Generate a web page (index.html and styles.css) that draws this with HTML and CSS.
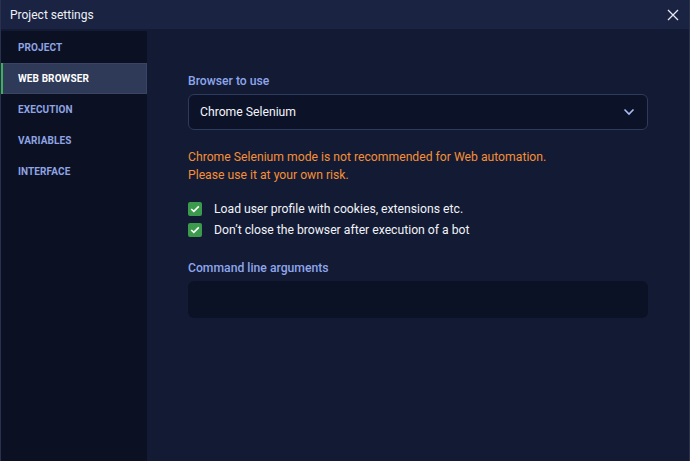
FILE: index.html
```html
<!DOCTYPE html>
<html lang="en">
<head>
    <meta charset="UTF-8" />
    <title>Project settings</title>
    <link rel="stylesheet" href="styles.css">
</head>
<body>
    <div class="window">
        <header class="titlebar">
            <span class="title">Project settings</span>
            <button class="close" aria-label="Close">
                <svg width="12" height="12" viewBox="0 0 12 12"><path d="M1 1 L11 11 M11 1 L1 11" stroke="#e6e9f2" stroke-width="1.3" fill="none"/></svg>
            </button>
        </header>
        <div class="body">
            <nav class="sidebar">
                <a class="nav-item">PROJECT</a>
                <a class="nav-item active">WEB BROWSER</a>
                <a class="nav-item">EXECUTION</a>
                <a class="nav-item">VARIABLES</a>
                <a class="nav-item">INTERFACE</a>
            </nav>
            <main class="content">
                <label class="field-label">Browser to use</label>
                <div class="select">
                    <span>Chrome Selenium</span>
                    <svg width="12" height="8" viewBox="0 0 12 8"><path d="M1.5 1.5 L6 6 L10.5 1.5" stroke="#a9bdf5" stroke-width="1.6" fill="none"/></svg>
                </div>
                <p class="warning">Chrome Selenium mode is not recommended for Web automation.<br>Please use it at your own risk.</p>
                <div class="checks">
                    <label class="check">
                        <span class="box"><svg width="10" height="8" viewBox="0 0 10 8"><path d="M1.2 4 L3.8 6.4 L8.8 1.4" stroke="#fff" stroke-width="1.6" fill="none"/></svg></span>
                        Load user profile with cookies, extensions etc.
                    </label>
                    <label class="check">
                        <span class="box"><svg width="10" height="8" viewBox="0 0 10 8"><path d="M1.2 4 L3.8 6.4 L8.8 1.4" stroke="#fff" stroke-width="1.6" fill="none"/></svg></span>
                        Don’t close the browser after execution of a bot
                    </label>
                </div>
                <label class="field-label args-label">Command line arguments</label>
                <div class="input"></div>
            </main>
        </div>
    </div>
</body>
</html>
```

FILE: styles.css
```css
html, body {
    margin: 0;
    padding: 0;
    height: 100%;
}
body {
    font-family: Roboto, 'Noto Sans', sans-serif;
    background: #131a33;
    color: #e8ebf4;
    font-size: 12.2px;
}
.window {
    height: 100%;
    display: flex;
    flex-direction: column;
    border-left: 1px solid #2a3150;
    border-right: 1px solid #2a3150;
    box-sizing: border-box;
}
.titlebar {
    height: 29px;
    background: #1a2342;
    display: flex;
    align-items: center;
    justify-content: space-between;
    padding: 0 10px 0 9px;
    flex-shrink: 0;
}
.title {
    font-size: 12px;
    color: #eef0f6;
}
.close {
    background: none;
    border: none;
    padding: 0;
    display: flex;
    cursor: pointer;
}
.body {
    flex: 1;
    display: flex;
    padding-top: 2px;
}
.sidebar {
    width: 146px;
    background: #0b1023;
    display: flex;
    flex-direction: column;
    padding-top: 1px;
}
.nav-item {
    height: 31px;
    display: flex;
    align-items: center;
    padding-left: 15px;
    font-size: 10px;
    font-weight: 700;
    letter-spacing: 0.1px;
    color: #8fa4e2;
    border-left: 2px solid transparent;
}
.nav-item.active {
    background: #2f3958;
    color: #ffffff;
    border-left-color: #3eb05a;
    box-shadow: inset -1px 0 0 #3a4565, inset 0 1px 0 #3a4565, inset 0 -1px 0 #3a4565;
}
.content {
    flex: 1;
    padding: 42px 41px 0 41px;
    display: flex;
    flex-direction: column;
}
.field-label {
    font-size: 12.2px;
    font-weight: 500;
    color: #8ea6ec;
    line-height: 16px;
    margin-bottom: 5px;
}
.select {
    height: 36px;
    box-sizing: border-box;
    border: 1px solid #2e3a5e;
    border-radius: 6px;
    background: #0c1227;
    display: flex;
    align-items: center;
    justify-content: space-between;
    padding: 0 12px 0 11px;
    font-size: 12.2px;
    color: #f3f5fa;
}
.warning {
    margin: 18px 0 0;
    color: #f39038;
    font-size: 12.2px;
    line-height: 18px;
}
.checks {
    margin-top: 18px;
    display: flex;
    flex-direction: column;
    gap: 7px;
}
.check {
    display: flex;
    align-items: center;
    gap: 12px;
    font-size: 12.2px;
    color: #f0f2f8;
    line-height: 14px;
}
.box {
    width: 14px;
    height: 14px;
    background: #3b9a4b;
    border-radius: 2px;
    display: flex;
    align-items: center;
    justify-content: center;
}
.args-label {
    margin-top: 23px;
}
.input {
    height: 37px;
    border-radius: 6px;
    background: #0c1225;
}
```
